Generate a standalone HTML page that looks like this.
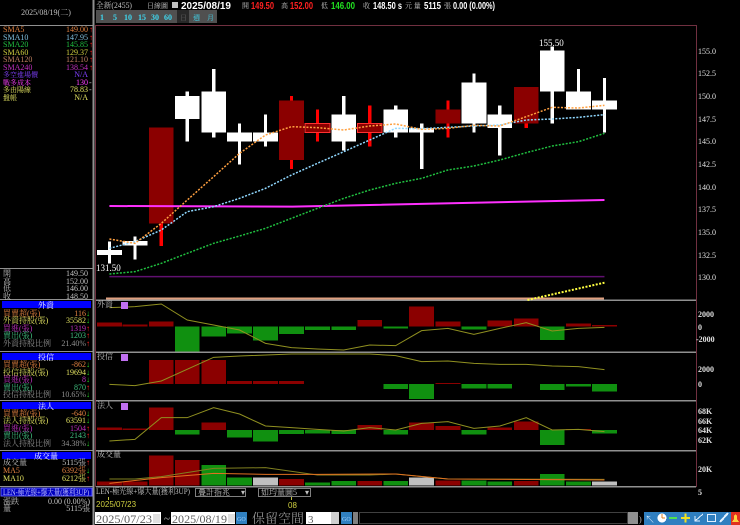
<!DOCTYPE html>
<html><head><meta charset="utf-8"><style>
html,body{margin:0;padding:0;background:#000;width:740px;height:525px;overflow:hidden}
svg{display:block}
text{font-family:"Liberation Serif","Noto Serif CJK TC","Noto Serif CJK SC",serif;font-size:8px}
.b{font-family:"Liberation Sans","Noto Sans CJK TC",sans-serif;font-weight:bold;font-size:10px}
.ax{font-family:"Liberation Sans",sans-serif;font-weight:bold;font-size:9px;fill:#e0e0e0}
</style></head><body>
<svg width="740" height="525" viewBox="0 0 740 525" xmlns="http://www.w3.org/2000/svg" shape-rendering="crispEdges">
<rect width="740" height="525" fill="#000"/>
<line x1="93.5" y1="0" x2="93.5" y2="525" stroke="#909090" stroke-width="2"/>
<line x1="0" y1="25.5" x2="93" y2="25.5" stroke="#909090"/>
<line x1="0" y1="268.5" x2="93" y2="268.5" stroke="#909090"/>
<line x1="0" y1="299.5" x2="93" y2="299.5" stroke="#909090"/>
<line x1="0" y1="351.5" x2="93" y2="351.5" stroke="#909090"/>
<line x1="0" y1="400.5" x2="93" y2="400.5" stroke="#909090"/>
<line x1="0" y1="450.5" x2="93" y2="450.5" stroke="#909090"/>
<line x1="0" y1="486.5" x2="93" y2="486.5" stroke="#909090"/>
<text x="46" y="15" fill="#c0c0c0" text-anchor="middle">2025/08/19(二)</text>
<g>
<text x="3" y="32" fill="#e08040">SMA5</text><text x="88" y="32" fill="#e08040" text-anchor="end">149.00</text>
<text x="3" y="40" fill="#80c0e0">SMA10</text><text x="88" y="40" fill="#80c0e0" text-anchor="end">147.95</text>
<text x="3" y="47" fill="#20c040">SMA20</text><text x="88" y="47" fill="#20c040" text-anchor="end">145.85</text>
<text x="3" y="55" fill="#d0d040">SMA60</text><text x="88" y="55" fill="#d0d040" text-anchor="end">129.37</text>
<text x="3" y="62" fill="#c08060">SMA120</text><text x="88" y="62" fill="#c08060" text-anchor="end">121.10</text>
<text x="3" y="70" fill="#c030c0">SMA240</text><text x="88" y="70" fill="#c030c0" text-anchor="end">138.54</text>
<text x="3" y="77" fill="#8040ff" style="font-size:7px">多空進場價</text><text x="88" y="77" fill="#8040ff" text-anchor="end">N/A</text>
<text x="3" y="85" fill="#ff40ff" style="font-size:7px">戰多成本</text><text x="88" y="85" fill="#ff40ff" text-anchor="end">130</text>
<text x="3" y="92" fill="#e0e060" style="font-size:7px">多由陽線</text><text x="88" y="92" fill="#e0e060" text-anchor="end">78.83</text>
<text x="3" y="100" fill="#e0e060" style="font-size:7px">盤帳</text><text x="88" y="100" fill="#e0e060" text-anchor="end">N/A</text>
<g fill="#ff2020"><text x="89" y="32">↑</text><text x="89" y="40">↑</text><text x="89" y="47">↑</text><text x="89" y="55">↑</text><text x="89" y="62">↑</text><text x="89" y="70">↑</text></g>
<g fill="#c0c0c0"><text x="89" y="85">-</text><text x="89" y="92">-</text></g>
</g>
<g fill="#c0c0c0">
<text x="3" y="276">開</text><text x="88" y="276" text-anchor="end">149.50</text>
<text x="3" y="284">高</text><text x="88" y="284" text-anchor="end">152.00</text>
<text x="3" y="291">低</text><text x="88" y="291" text-anchor="end">146.00</text>
<text x="3" y="299">收</text><text x="88" y="299" text-anchor="end">148.50</text>
</g>
<g style="font-size:7px">
<rect x="2" y="301" width="89" height="7" fill="#0000ff"/><text x="46" y="308" fill="#fff" text-anchor="middle">外資</text>
<text x="3" y="316" fill="#e08040">買賣超(張)</text><text x="86" y="316" fill="#e08040" text-anchor="end">116</text><text x="86" y="316" fill="#20d020">↓</text>
<text x="3" y="323" fill="#e0e060">外資持股(張)</text><text x="86" y="323" fill="#e0e060" text-anchor="end">35582</text><text x="86" y="323" fill="#20d020">↓</text>
<text x="3" y="331" fill="#c030c0">買進(張)</text><text x="86" y="331" fill="#c030c0" text-anchor="end">1319</text><text x="86" y="331" fill="#ff2020">↑</text>
<text x="3" y="338" fill="#40c080">賣出(張)</text><text x="86" y="338" fill="#40c080" text-anchor="end">1203</text><text x="86" y="338" fill="#ff2020">↑</text>
<text x="3" y="346" fill="#909090">外資持股比例</text><text x="86" y="346" fill="#909090" text-anchor="end">21.40%</text><text x="86" y="346" fill="#ff2020">↑</text>
<rect x="2" y="353" width="89" height="7" fill="#0000ff"/><text x="46" y="360" fill="#fff" text-anchor="middle">投信</text>
<text x="3" y="367" fill="#e08040">買賣超(張)</text><text x="86" y="367" fill="#e08040" text-anchor="end">-862</text><text x="86" y="367" fill="#20d020">↓</text>
<text x="3" y="375" fill="#e0e060">投信持股(張)</text><text x="86" y="375" fill="#e0e060" text-anchor="end">19694</text><text x="86" y="375" fill="#20d020">↓</text>
<text x="3" y="382" fill="#c030c0">買進(張)</text><text x="86" y="382" fill="#c030c0" text-anchor="end">8</text><text x="86" y="382" fill="#20d020">↓</text>
<text x="3" y="390" fill="#40c080">賣出(張)</text><text x="86" y="390" fill="#40c080" text-anchor="end">870</text><text x="86" y="390" fill="#ff2020">↑</text>
<text x="3" y="397" fill="#909090">投信持股比例</text><text x="86" y="397" fill="#909090" text-anchor="end">10.65%</text><text x="86" y="397" fill="#20d020">↓</text>
<rect x="2" y="402" width="89" height="7" fill="#0000ff"/><text x="46" y="409" fill="#fff" text-anchor="middle">法人</text>
<text x="3" y="416" fill="#e08040">買賣超(張)</text><text x="86" y="416" fill="#e08040" text-anchor="end">-640</text><text x="86" y="416" fill="#20d020">↓</text>
<text x="3" y="423" fill="#e0e060">法人持股(張)</text><text x="86" y="423" fill="#e0e060" text-anchor="end">63591</text><text x="86" y="423" fill="#20d020">↓</text>
<text x="3" y="431" fill="#c030c0">買進(張)</text><text x="86" y="431" fill="#c030c0" text-anchor="end">1504</text><text x="86" y="431" fill="#ff2020">↑</text>
<text x="3" y="438" fill="#40c080">賣出(張)</text><text x="86" y="438" fill="#40c080" text-anchor="end">2143</text><text x="86" y="438" fill="#ff2020">↑</text>
<text x="3" y="446" fill="#909090">法人持股比例</text><text x="86" y="446" fill="#909090" text-anchor="end">34.38%</text><text x="86" y="446" fill="#20d020">↓</text>
<rect x="2" y="452" width="89" height="7" fill="#0000ff"/><text x="46" y="459" fill="#fff" text-anchor="middle">成交量</text>
<text x="3" y="465" fill="#c0c0c0">成交量</text><text x="86" y="465" fill="#c0c0c0" text-anchor="end">5115張</text><text x="86" y="465" fill="#ff2020">↑</text>
<text x="3" y="473" fill="#e08040">MA5</text><text x="86" y="473" fill="#e08040" text-anchor="end">6392張</text><text x="86" y="473" fill="#20d020">↓</text>
<text x="3" y="481" fill="#e0e060">MA10</text><text x="86" y="481" fill="#e0e060" text-anchor="end">6212張</text><text x="86" y="481" fill="#ff2020">↑</text>
<rect x="1" y="488" width="91" height="8" fill="#0000c0" stroke="#6060ff"/><text x="3" y="495" fill="#c0c0ff" textLength="86" lengthAdjust="spacingAndGlyphs">LEN-極光線+爆大量(獲利3UP)</text>
<text x="3" y="504" fill="#c0c0c0">漲跌</text><text x="90" y="504" fill="#c0c0c0" text-anchor="end">0.00 (0.00%)</text>
<text x="3" y="511" fill="#c0c0c0">量</text><text x="90" y="511" fill="#c0c0c0" text-anchor="end">5115張</text>
</g>

<!-- top bar -->
<text x="96" y="8" fill="#c0c0c0" textLength="36" lengthAdjust="spacingAndGlyphs">全新(2455)</text>
<text x="147" y="8" fill="#c0c0c0" style="font-size:7px">日線圖</text>
<rect x="172" y="2" width="6" height="6" fill="#c0c0c0"/>
<text x="181" y="9" class="b" fill="#fff" textLength="50" lengthAdjust="spacingAndGlyphs">2025/08/19</text>
<text x="242" y="8" fill="#c0c0c0" style="font-size:7px">開</text><text x="251" y="9" class="b" fill="#ff2020" textLength="23" lengthAdjust="spacingAndGlyphs">149.50</text>
<text x="281" y="8" fill="#c0c0c0" style="font-size:7px">高</text><text x="290" y="9" class="b" fill="#ff2020" textLength="23" lengthAdjust="spacingAndGlyphs">152.00</text>
<text x="321" y="8" fill="#c0c0c0" style="font-size:7px">低</text><text x="331" y="9" class="b" fill="#20e020" textLength="24" lengthAdjust="spacingAndGlyphs">146.00</text>
<text x="363" y="8" fill="#c0c0c0" style="font-size:7px">收</text><text x="373" y="9" class="b" fill="#fff" textLength="29" lengthAdjust="spacingAndGlyphs">148.50 s</text>
<text x="405" y="8" fill="#c0c0c0" style="font-size:7px">元 量</text><text x="424" y="9" class="b" fill="#fff" textLength="17" lengthAdjust="spacingAndGlyphs">5115</text>
<text x="444" y="8" fill="#c0c0c0" style="font-size:7px">張</text><text x="453" y="9" class="b" fill="#fff" textLength="42" lengthAdjust="spacingAndGlyphs">0.00 (0.00%)</text>
<g>
<rect x="96" y="10" width="121" height="13" fill="#505050"/>
<rect x="177" y="10" width="12" height="13" fill="#282828"/>
<g class="ax" style="fill:#40d8f0;font-size:8px">
<text x="100" y="20">1</text><text x="113" y="20">5</text><text x="124" y="20">10</text><text x="138" y="20">15</text><text x="151" y="20">30</text><text x="164" y="20">60</text>
</g>
<text x="180" y="20" fill="#606060" style="font-size:7px">日</text><text x="193" y="20" fill="#40d8f0" style="font-size:7px">週</text><text x="207" y="20" fill="#40d8f0" style="font-size:7px">月</text>
</g>

<rect x="95.5" y="25.5" width="601" height="461" fill="none" stroke="#703040"/>
<line x1="96" y1="300" x2="696" y2="300" stroke="#909090" stroke-width="1.5"/>
<line x1="96" y1="352" x2="696" y2="352" stroke="#909090" stroke-width="1.5"/>
<line x1="96" y1="400.5" x2="696" y2="400.5" stroke="#909090" stroke-width="1.5"/>
<line x1="96" y1="450.5" x2="696" y2="450.5" stroke="#909090" stroke-width="1.5"/>
<line x1="96" y1="486.5" x2="696" y2="486.5" stroke="#909090" stroke-width="1.5"/>
<line x1="106" y1="298.5" x2="604" y2="298.5" stroke="#e0a080" stroke-width="2"/>

<g transform="translate(95,20) scale(0.41186,0.33333)">
<g fill="#fff">
<rect x="31" y="665" width="8" height="65"/><rect x="5" y="690" width="60" height="15"/>
<rect x="93" y="650" width="8" height="68"/><rect x="67" y="663" width="60" height="13"/>
<rect x="220" y="215" width="8" height="150"/><rect x="194" y="228" width="60" height="69"/>
<rect x="284" y="147" width="8" height="205"/><rect x="258" y="214" width="60" height="124"/>
<rect x="347" y="310" width="8" height="123"/><rect x="321" y="337" width="60" height="28"/>
<rect x="410" y="283" width="8" height="97"/><rect x="384" y="337" width="60" height="28"/>
<rect x="600" y="228" width="8" height="164"/><rect x="574" y="283" width="60" height="82"/>
<rect x="726" y="256" width="8" height="96"/><rect x="700" y="268" width="60" height="70"/>
<rect x="789" y="310" width="8" height="137"/><rect x="763" y="324" width="60" height="14"/>
<rect x="916" y="160" width="8" height="178"/><rect x="890" y="187" width="60" height="123"/>
<rect x="979" y="256" width="8" height="150"/><rect x="953" y="283" width="60" height="41"/>
<rect x="1106" y="80" width="8" height="230"/><rect x="1080" y="92" width="60" height="122"/>
<rect x="1170" y="147" width="8" height="121"/><rect x="1144" y="214" width="60" height="54"/>
<rect x="1233" y="174" width="8" height="164"/><rect x="1207" y="242" width="60" height="26"/>
</g>
<g>
<rect x="157" y="323" width="8" height="355" fill="#ff0000"/><rect x="131" y="323" width="60" height="287" fill="#8b0000"/>
<rect x="473" y="228" width="8" height="219" fill="#ff0000"/><rect x="447" y="242" width="60" height="178" fill="#8b0000"/>
<rect x="536" y="268" width="8" height="97" fill="#ff0000"/><rect x="510" y="310" width="60" height="28" fill="#8b0000" stroke="#ff3030" vector-effect="non-scaling-stroke"/>
<rect x="663" y="256" width="8" height="123" fill="#ff0000"/><rect x="637" y="310" width="60" height="28" fill="#8b0000" stroke="#ff3030" vector-effect="non-scaling-stroke"/>
<rect x="853" y="242" width="8" height="110" fill="#ff0000"/><rect x="827" y="268" width="60" height="42" fill="#8b0000"/>
<rect x="1043" y="201" width="8" height="123" fill="#ff0000"/><rect x="1017" y="201" width="60" height="109" fill="#8b0000"/>
</g>
<g fill="none" shape-rendering="auto">
<line x1="35" y1="770" x2="1237" y2="770" stroke="#601070" stroke-width="1.5" vector-effect="non-scaling-stroke"/>
<polyline points="35,558 480,560 1237,540" stroke="#ff30ff" stroke-width="2" vector-effect="non-scaling-stroke"/>
<polyline points="35,762 97,755 161,730 224,700 288,670 351,648 414,625 477,595 540,565 604,535 667,510 730,490 793,475 857,450 920,438 983,420 1047,398 1110,378 1174,365 1237,340" stroke="#20c040" stroke-width="1.5" stroke-dasharray="2,1.5" vector-effect="non-scaling-stroke"/>
<polyline points="35,685 97,665 161,630 224,575 288,560 351,535 414,505 477,465 540,430 604,395 667,360 730,325 793,326 857,322 920,318 983,315 1047,300 1110,297 1174,292 1237,284" stroke="#90d8ff" stroke-width="1.5" stroke-dasharray="2,1.5" vector-effect="non-scaling-stroke"/>
<polyline points="35,657 97,670 161,610 224,540 288,470 351,400 414,345 477,320 540,323 604,330 667,318 730,312 793,328 857,325 920,316 983,318 1047,290 1110,262 1174,264 1237,256" stroke="#ffa040" stroke-width="1.5" stroke-dasharray="2,1.5" vector-effect="non-scaling-stroke"/>
<polyline points="1050,840 1237,788" stroke="#ffff40" stroke-width="2" stroke-dasharray="2,1.5" vector-effect="non-scaling-stroke"/>
</g>
</g>
<text x="96" y="271" fill="#fff" style="font-size:9px">131.50</text>
<text x="539" y="46" fill="#fff" style="font-size:9px">155.50</text>
<g class="ax" style="font-weight:normal;font-family:'Liberation Serif',serif">
<text x="698" y="54">155.0</text><text x="698" y="76">152.5</text><text x="698" y="99">150.0</text><text x="698" y="122">147.5</text><text x="698" y="144">145.0</text><text x="698" y="167">142.5</text><text x="698" y="190">140.0</text><text x="698" y="212">137.5</text><text x="698" y="235">135.0</text><text x="698" y="258">132.5</text><text x="698" y="280">130.0</text>
</g>
<g class="ax">
<text x="698" y="317">2000</text><text x="698" y="330">0</text><text x="696" y="342">-2000</text>
<text x="698" y="372">2000</text><text x="698" y="387">0</text>
<text x="698" y="414">68K</text><text x="698" y="424">66K</text><text x="698" y="433">64K</text><text x="698" y="443">62K</text>
<text x="698" y="472">20K</text><text x="698" y="495">5</text>
</g>

<g transform="translate(95,295) scale(0.41186,0.33333)">
<g fill="#8b0000">
<rect x="5" y="83" width="60" height="12"/><rect x="67" y="88" width="60" height="7"/><rect x="131" y="80" width="60" height="15"/>
<rect x="637" y="75" width="60" height="20"/><rect x="763" y="35" width="60" height="60"/><rect x="827" y="80" width="60" height="15"/>
<rect x="953" y="77" width="60" height="18"/><rect x="1017" y="70" width="60" height="25"/><rect x="1144" y="85" width="60" height="10"/><rect x="1207" y="90" width="60" height="5"/>
<rect x="131" y="195" width="60" height="72"/><rect x="194" y="195" width="60" height="72"/><rect x="258" y="195" width="60" height="72"/>
<rect x="321" y="258" width="60" height="9"/><rect x="384" y="258" width="60" height="9"/><rect x="447" y="258" width="60" height="9"/><rect x="827" y="264" width="60" height="3"/>
<rect x="5" y="398" width="60" height="7"/><rect x="67" y="400" width="60" height="5"/><rect x="131" y="337" width="60" height="68"/><rect x="258" y="382" width="60" height="23"/>
<rect x="637" y="390" width="60" height="15"/><rect x="763" y="383" width="60" height="22"/><rect x="827" y="393" width="60" height="12"/><rect x="953" y="398" width="60" height="7"/><rect x="1017" y="380" width="60" height="25"/><rect x="1144" y="402" width="60" height="3"/>
<rect x="5" y="560" width="60" height="12"/><rect x="67" y="560" width="60" height="12"/><rect x="131" y="482" width="60" height="90"/><rect x="194" y="495" width="60" height="77"/><rect x="447" y="552" width="60" height="20"/><rect x="637" y="558" width="60" height="14"/><rect x="827" y="556" width="60" height="16"/><rect x="1017" y="558" width="60" height="14"/>
</g>
<g fill="#109010">
<rect x="194" y="95" width="60" height="75"/><rect x="258" y="95" width="60" height="30"/><rect x="321" y="95" width="60" height="20"/><rect x="384" y="95" width="60" height="42"/><rect x="447" y="95" width="60" height="22"/><rect x="510" y="95" width="60" height="10"/><rect x="574" y="95" width="60" height="10"/><rect x="700" y="95" width="60" height="5"/><rect x="890" y="95" width="60" height="8"/><rect x="1080" y="95" width="60" height="40"/>
<rect x="700" y="267" width="60" height="15"/><rect x="763" y="267" width="60" height="45"/><rect x="890" y="267" width="60" height="13"/><rect x="953" y="267" width="60" height="13"/><rect x="1080" y="267" width="60" height="18"/><rect x="1144" y="267" width="60" height="8"/><rect x="1207" y="267" width="60" height="23"/>
<rect x="194" y="405" width="60" height="13"/><rect x="321" y="405" width="60" height="23"/><rect x="384" y="405" width="60" height="35"/><rect x="447" y="405" width="60" height="12"/><rect x="510" y="405" width="60" height="10"/><rect x="574" y="405" width="60" height="12"/><rect x="700" y="405" width="60" height="13"/><rect x="890" y="405" width="60" height="13"/><rect x="1080" y="405" width="60" height="45"/><rect x="1207" y="405" width="60" height="10"/>
<rect x="258" y="510" width="60" height="62"/><rect x="321" y="547" width="60" height="25"/><rect x="510" y="562" width="60" height="10"/><rect x="574" y="558" width="60" height="14"/><rect x="700" y="558" width="60" height="14"/><rect x="890" y="556" width="60" height="16"/><rect x="953" y="560" width="60" height="12"/><rect x="1080" y="537" width="60" height="35"/><rect x="1144" y="560" width="60" height="12"/>
</g>
<g fill="#c0c0c0"><rect x="384" y="548" width="60" height="24"/><rect x="763" y="547" width="60" height="25"/><rect x="1207" y="560" width="60" height="12"/></g>
<g fill="none" shape-rendering="auto">
<polyline vector-effect="non-scaling-stroke" stroke="#909020" points="35,38 97,35 161,27 224,75 288,90 351,105 414,145 477,158 540,162 604,165 667,150 730,152 793,107 857,100 920,118 983,100 1047,83 1110,108 1174,100 1237,97"/>
<polyline vector-effect="non-scaling-stroke" stroke="#909020" points="35,268 97,272 161,258 288,187 351,183 477,177 667,177 730,182 793,200 857,198 920,205 983,208 1047,208 1110,213 1174,215 1237,224"/>
<polyline vector-effect="non-scaling-stroke" stroke="#909020" points="35,438 97,433 161,368 224,368 288,338 351,357 414,393 477,398 540,403 604,408 667,398 730,405 793,385 857,380 920,400 983,393 1047,368 1110,405 1174,403 1237,410"/>
<polyline vector-effect="non-scaling-stroke" stroke="#808020" points="35,552 97,552 161,545 288,520 414,518 540,540 667,540 730,537 857,552 1237,553"/>
<polyline vector-effect="non-scaling-stroke" stroke="#e07020" points="35,565 161,548 288,535 414,538 540,538 730,537 857,552 1237,555"/>
</g>
</g>
<g fill="#c0c0c0" style="font-size:7px">
<text x="97" y="307">外資</text><text x="97" y="359">投信</text><text x="97" y="408">法人</text><text x="97" y="457">成交量</text>
</g>
<g fill="#c070f0"><rect x="121" y="302" width="7" height="7"/><rect x="121" y="354" width="7" height="7"/><rect x="121" y="403" width="7" height="7"/></g>

<g style="font-size:7px">
<text x="96" y="494" fill="#c0c0c0" textLength="94" lengthAdjust="spacingAndGlyphs">LEN-極光線+爆大量(獲利3UP)</text>
<rect x="195.5" y="488.5" width="50" height="8" fill="#000" stroke="#808080"/><text x="198" y="495" fill="#c0c0c0">疊計指兆</text><text x="241" y="495" fill="#c0c0c0">▾</text>
<rect x="258.5" y="488.5" width="52" height="8" fill="#000" stroke="#808080"/><text x="261" y="495" fill="#c0c0c0">如均量圖5</text><text x="305" y="495" fill="#c0c0c0">▾</text>
</g>
<line x1="108.5" y1="497" x2="108.5" y2="500" stroke="#c0c040"/>
<text x="96" y="507" fill="#d0d040" style="font-family:'Liberation Sans',sans-serif;font-size:8px">2025/07/23</text>
<line x1="291.5" y1="497" x2="291.5" y2="500" stroke="#c0c040"/>
<text x="288" y="508" fill="#d0d040" style="font-family:'Liberation Sans',sans-serif;font-size:8px">08</text>

<rect x="95" y="512" width="66" height="12" fill="#fff"/><text x="96" y="523" fill="#606060" style="font-size:12px" textLength="56" lengthAdjust="spacingAndGlyphs">2025/07/23</text><rect x="153" y="514" width="7" height="9" fill="#e0e0e0"/>
<text x="164" y="522" fill="#c0c0c0" style="font-size:11px">~</text>
<rect x="171" y="512" width="64" height="12" fill="#fff"/><text x="172" y="523" fill="#606060" style="font-size:12px" textLength="55" lengthAdjust="spacingAndGlyphs">2025/08/19</text><rect x="228" y="514" width="7" height="9" fill="#e0e0e0"/>
<rect x="236" y="512" width="11" height="12" fill="#3080c0"/><text x="237" y="521" fill="#a0d0ff" style="font-size:6px">GO</text>
<text x="252" y="523" fill="#909090" style="font-size:13px;font-family:'Noto Serif CJK TC','Noto Serif CJK SC',serif">保留空間</text>
<rect x="306" y="512" width="25" height="12" fill="#fff"/><text x="308" y="523" fill="#606060" style="font-size:11px">3</text><rect x="331" y="512" width="8" height="12" fill="#d0d0d0"/>
<rect x="341" y="512" width="11" height="12" fill="#3080c0"/><text x="342" y="521" fill="#a0d0ff" style="font-size:6px">GO</text>
<rect x="353" y="512" width="5" height="12" fill="#808080"/>
<rect x="359.5" y="512.5" width="268" height="11" fill="#000" stroke="#404040"/>
<rect x="628" y="512" width="10" height="12" fill="#909090"/>
<text x="639" y="522" fill="#c0c0c0">)</text>
<g>
<rect x="644" y="512" width="96" height="13" fill="#2f7fc0"/>
<text x="645" y="523" fill="#e0f0ff" style="font-size:10px">↖</text>
<circle cx="662" cy="518" r="4.5" fill="#fff"/><path d="M662 518 L662 514 M662 518 L665 518" stroke="#e08020"/>
<rect x="669" y="517" width="8" height="2" fill="#50e050"/>
<rect x="681" y="517" width="9" height="2" fill="#f0e020"/><rect x="684.5" y="513.5" width="2" height="9" fill="#f0e020"/>
<path d="M695 521 L703 514 M695 516 L695 521 L700 521" stroke="#e0f0ff" fill="none"/>
<rect x="707.5" y="514.5" width="8" height="7" fill="none" stroke="#e0f0ff"/>
<path d="M720 522 L728 513" stroke="#e0f0ff" stroke-width="2"/>
<rect x="731" y="512" width="9" height="13" fill="#e03020"/><path d="M732 522 L739 522 L737 519 L737 516 Q735.5 513 734 516 L734 519 Z" fill="#ffd040"/>
</g>
</svg>
</body></html>
